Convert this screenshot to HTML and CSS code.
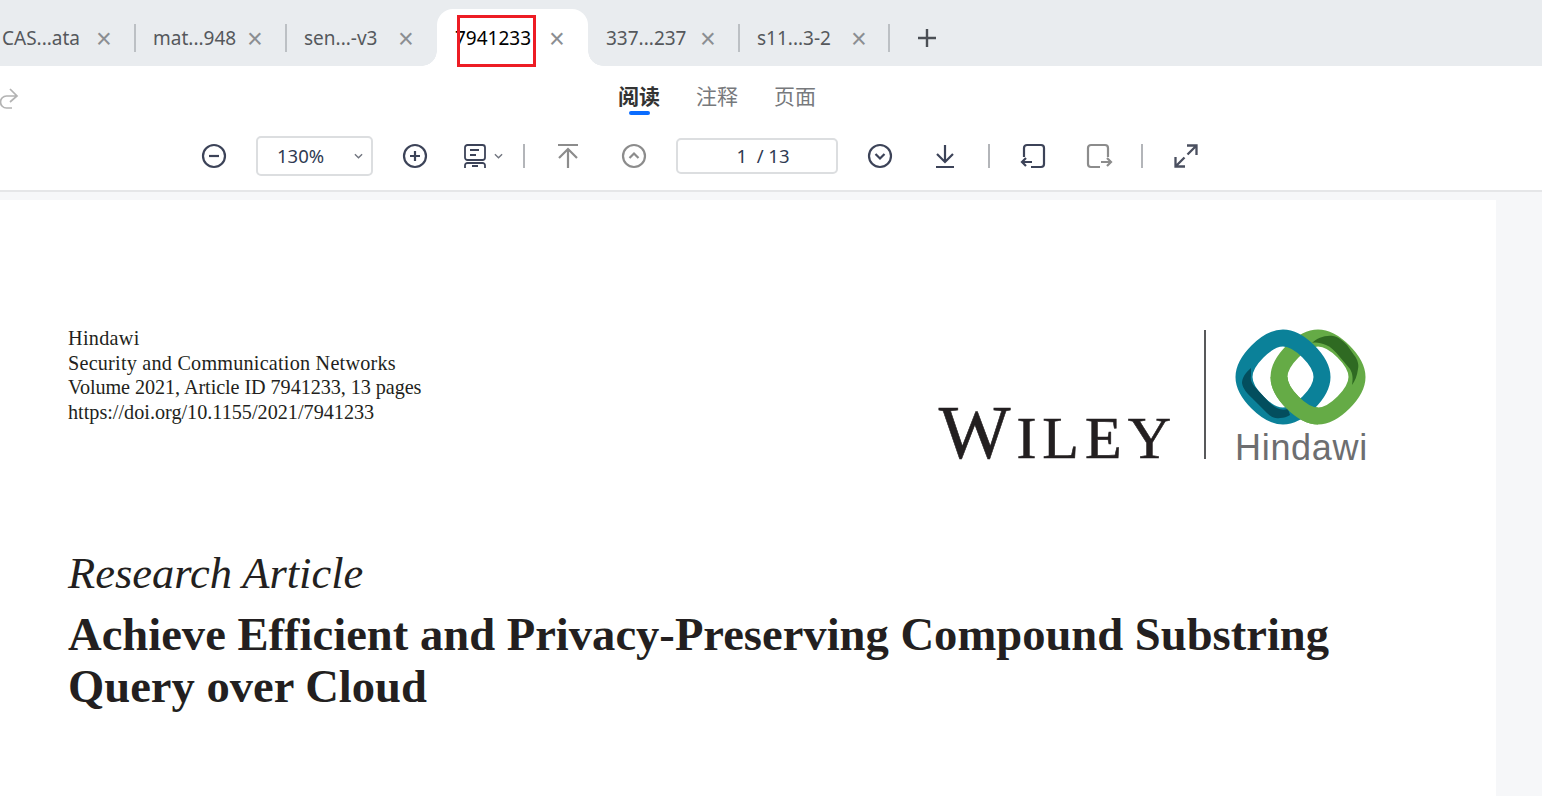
FILE: index.html
```html
<!DOCTYPE html>
<html lang="en">
<head>
    <meta charset="UTF-8">
    <meta name="viewport" content="width=device-width, initial-scale=1.0">
    <title>7941233</title>
    <link rel="stylesheet" href="styles.css">
</head>
<body>
    <div class="tabbar">
        <div class="tab"><span class="tab-name">CAS...ata</span><span class="tab-close">×</span></div>
        <div class="tab"><span class="tab-name">mat...948</span><span class="tab-close">×</span></div>
        <div class="tab tab-nosep"><span class="tab-name">sen...-v3</span><span class="tab-close">×</span></div>
        <div class="tab tab-active"><span class="tab-name">7941233</span><span class="tab-close">×</span><div class="highlight"></div></div>
        <div class="tab"><span class="tab-name">337...237</span><span class="tab-close">×</span></div>
        <div class="tab tab-last"><span class="tab-name">s11...3-2</span><span class="tab-close">×</span></div>
        <svg class="tab-add" viewBox="0 0 20 20"><path d="M10 1v18M1 10h18"/></svg>
    </div>

    <div class="header">
        <div class="modes">
            <svg class="redo" viewBox="0 0 20 24"><path d="M17 11H6.500a6 6 0 0 0 0 12H12M10 4l7 7-7 6"/></svg>
            <div class="mode-list">
                <div class="mode mode-active">阅读</div>
                <div class="mode">注释</div>
                <div class="mode">页面</div>
            </div>
        </div>

        <div class="toolbar">
            <div class="group group-zoom">
                <button class="tool"><svg viewBox="0 0 24 24"><circle cx="12" cy="12" r="11"/><path d="M7 12h10"/></svg></button>
                <div class="zoom-select"><span class="zoom-value">130%</span><svg class="caret" viewBox="0 0 10 6"><path d="M1 1l4 4 4-4"/></svg></div>
                <button class="tool"><svg viewBox="0 0 24 24"><circle cx="12" cy="12" r="11"/><path d="M7 12h10M12 7v10"/></svg></button>
                <div class="layout-btn">
                    <svg class="layout-icon" viewBox="0 0 22 24"><rect x="1" y="1" width="20" height="15" rx="2.5"/><path d="M6 6h9M6 11h6M1 24v-2.500a2.500 2.500 0 0 1 2.500-2.500h15a2.500 2.500 0 0 1 2.500 2.500v2.500M8 22h6"/></svg>
                    <svg class="caret" viewBox="0 0 10 6"><path d="M1 1l4 4 4-4"/></svg>
                </div>
            </div>
            <span class="sep"></span>
            <div class="group group-nav">
                <div class="group group-pageup">
                    <button class="tool tool-off"><svg viewBox="0 0 24 24"><path d="M2 1h20M12 24V6M3 14l9-9 9 9"/></svg></button>
                    <button class="tool tool-off"><svg viewBox="0 0 24 24"><circle cx="12" cy="12" r="11"/><path d="M7.500 14l4.500-4.500 4.500 4.500"/></svg></button>
                </div>
                <div class="page-box">1&nbsp;&nbsp;/&nbsp;13</div>
                <button class="tool"><svg viewBox="0 0 24 24"><circle cx="12" cy="12" r="11"/><path d="M7.500 10l4.500 4.500 4.500-4.500"/></svg></button>
                <button class="tool tool-download"><svg viewBox="0 0 24 24"><path d="M12 1v17M4 10l8 8 8-8M3 23h18"/></svg></button>
            </div>
            <span class="sep"></span>
            <div class="group group-rotate">
                <button class="tool"><svg viewBox="0 0 24 24"><path d="M3 13V4a3 3 0 0 1 3-3h14a3 3 0 0 1 3 3v16a3 3 0 0 1-3 3H10M1 18h10M5 14l-4 4 4 4"/></svg></button>
                <button class="tool tool-off"><svg viewBox="0 0 24 24"><path d="M21 13V4a3 3 0 0 0-3-3H4a3 3 0 0 0-3 3v16a3 3 0 0 0 3 3h9M14 18h10M20 14l4 4-4 4"/></svg></button>
            </div>
            <span class="sep"></span>
            <button class="tool tool-expand"><svg viewBox="0 0 24 24"><path d="M13 1.500h9.500V11M22.500 1.500l-9 9M1.500 13v9.500H11M1.500 22.500l9-9"/></svg></button>
        </div>
    </div>

    <div class="viewer">
        <div class="paper">
            <div class="paper-top">
                <div class="meta">
                    <div class="meta-name">Hindawi</div>
                    <div class="meta-journal">Security and Communication Networks</div>
                    <div class="meta-volume">Volume 2021, Article ID 7941233, 13 pages</div>
                    <div>https://doi.org/10.1155/2021/7941233</div>
                </div>
                <div class="logos">
                    <div class="wiley"><span class="wiley-w">W</span>ILEY</div>
                    <div class="logo-rule"></div>
                    <div class="hindawi">
                        <svg class="rings" viewBox="0 0 132 96">
                            <path class="ring-green" transform="translate(35 0)" d="M48 9C64 9 87 32 87 48C87 64 64 87 48 87C32 87 9 64 9 48C9 32 32 9 48 9Z"/>
                            <path fill="#2f6a22" d="M77 14C82 9 90 6 98 7C104 8 108 12 112 16L119 26C123 31 124 36 123 40C122 47 120 52 117 56C118 50 118 45 115 40L104 27C100 22 96 18 91 16C86 14 81 13 77 14Z"/>
                            <path class="ring-teal" d="M48 9C64 9 87 32 87 48C87 64 64 87 48 87C32 87 9 64 9 48C9 32 32 9 48 9Z"/>
                            <path fill="#034e5e" d="M16 39C10 44 7 49 7 54C8 60 12 64 17 69L32 84C36 88 40 90 45 89C49 89 52 88 55 86L53 80C49 81 46 81 42 79C38 77 35 74 32 71L20 58C17 55 15 51 16 47Z"/>
                            <path class="ring-green" transform="translate(35 0)" d="M9 48C9 64 32 87 48 87"/>
                        </svg>
                        <div class="hindawi-name">Hindawi</div>
                    </div>
                </div>
            </div>
            <div class="article-type">Research Article</div>
            <h1 class="article-title">Achieve Efficient and Privacy-Preserving Compound Substring Query over Cloud</h1>
        </div>
    </div>
</body>
</html>
```

FILE: styles.css
```css
html, body {
    margin: 0;
    padding: 0;
    height: 796px;
    overflow: hidden;
}

body {
    font-family: "Noto Sans", "Noto Sans CJK SC", sans-serif;
    background-color: #fff;
    color: #333;
}

button {
    border: 0;
    background: none;
    padding: 0;
}

/* tabs */
.tabbar {
    display: flex;
    align-items: flex-end;
    height: 66px;
    margin-left: -15px;
    width: 1557px;
    background-color: #e9ecef;
}

.tab {
    position: relative;
    display: flex;
    align-items: center;
    box-sizing: border-box;
    width: 151px;
    height: 57px;
    padding: 0 0 0 17px;
    font-size: 19px;
    color: #55585c;
}

.tab::after {
    content: "";
    position: absolute;
    right: 0;
    top: 15px;
    width: 2px;
    height: 28px;
    background-color: #bcc0c4;
}

.tab-nosep::after {
    display: none;
}

.tab-last {
    width: 150px;
}

.tab-name {
    width: 94px;
    white-space: nowrap;
    line-height: 26px;
}

.tab-close {
    font-family: "Liberation Sans", sans-serif;
    font-size: 27px;
    font-weight: 300;
    color: #8b8e92;
    line-height: 26px;
    margin-top: 2px;
}

.tab-active {
    margin: 0 1px 0 -1px;
    padding-left: 18px;
    background-color: #fff;
    border-radius: 16px 16px 0 0;
    color: #000;
}

.tab-active::before,
.tab-active::after {
    content: "";
    position: absolute;
    top: auto;
    bottom: 0;
    width: 15px;
    height: 15px;
    background-color: transparent;
}

.tab-active::before {
    left: -15px;
    background-image: radial-gradient(circle at 0 0, #e9ecef 14.500px, #fff 15px);
}

.tab-active::after {
    right: -15px;
    background-image: radial-gradient(circle at 100% 0, #e9ecef 14.500px, #fff 15px);
}

.highlight {
    position: absolute;
    left: 20px;
    top: 6px;
    width: 73px;
    height: 46px;
    border: 3px solid #ed1c24;
}

.tab-add {
    width: 20px;
    height: 20px;
    margin: 0 0 18px 27px;
    fill: none;
    stroke: #4b4f55;
    stroke-width: 2.400;
}

/* reader header */
.header {
    box-sizing: border-box;
    height: 126px;
    border-bottom: 2px solid #e5e6e8;
}

.modes {
    display: flex;
    align-items: center;
    height: 61px;
}

.redo {
    width: 20px;
    height: 24px;
    flex: none;
    fill: none;
    stroke: #b3b3b3;
    stroke-width: 1.700;
}

.mode-list {
    display: flex;
    gap: 36px;
    margin: -4px 0 0 598px;
}

.mode {
    position: relative;
    font-family: "Noto Sans CJK SC", sans-serif;
    font-size: 21px;
    line-height: 30px;
    color: #77797c;
}

.mode-active {
    font-weight: 700;
    color: #333;
}

.mode-active::after {
    content: "";
    position: absolute;
    left: 11px;
    bottom: -5px;
    width: 21px;
    height: 4px;
    border-radius: 2px;
    background-color: #0a6cff;
}

.toolbar {
    display: flex;
    align-items: center;
    gap: 20px;
    height: 58px;
    padding-left: 192px;
}

.group {
    display: flex;
    align-items: center;
}

.group-zoom {
    gap: 20px;
}

.group-nav {
    gap: 20px;
    margin-left: 1px;
}

.group-pageup {
    gap: 22px;
}

.group-rotate {
    gap: 22px;
    margin-left: 1px;
}

.tool {
    display: flex;
    align-items: center;
    justify-content: center;
    width: 44px;
    height: 26px;
}

.tool-download {
    width: 46px;
}

.tool-expand {
    margin-left: 1px;
}

.tool svg {
    width: 24px;
    height: 24px;
    fill: none;
    stroke: #3c4358;
    stroke-width: 2.200;
    overflow: visible;
}

.tool-off svg {
    stroke: #8c8c8c;
}

.tool-expand svg {
    stroke: #4a4f5f;
    stroke-width: 2.300;
}

.zoom-select {
    display: flex;
    align-items: center;
    justify-content: space-between;
    box-sizing: border-box;
    width: 117px;
    height: 40px;
    padding: 0 8px 0 19px;
    border: 2px solid #dcdee0;
    border-radius: 5px;
    font-size: 18.500px;
    color: #2f3a52;
}

.zoom-value {
    margin-top: -2px;
}

.caret {
    width: 9px;
    height: 6px;
    fill: none;
    stroke: #70747e;
    stroke-width: 1.500;
}

.layout-btn {
    display: flex;
    align-items: center;
    box-sizing: border-box;
    width: 46px;
    padding-left: 7px;
    gap: 8px;
}

.layout-icon {
    width: 22px;
    height: 24px;
    fill: none;
    stroke: #3c4358;
    stroke-width: 1.800;
}

.sep {
    width: 2px;
    height: 24px;
    background-color: #b3b5b9;
}

.page-box {
    box-sizing: border-box;
    width: 162px;
    height: 36px;
    padding-left: 12px;
    border: 2px solid #dcdee0;
    border-radius: 5px;
    text-align: center;
    font-size: 18.500px;
    line-height: 32px;
    color: #2f3a52;
}

/* document */
.viewer {
    height: 604px;
    padding-top: 8px;
    box-sizing: border-box;
    background-color: #f6f7f9;
    overflow: hidden;
}

.paper {
    box-sizing: border-box;
    width: 1496px;
    height: 640px;
    padding: 126px 129px 0 68px;
    background-color: #fff;
    font-family: "Liberation Serif", serif;
    color: #231f20;
}

.paper-top {
    display: flex;
    justify-content: space-between;
    align-items: flex-start;
    height: 221px;
}

.meta {
    font-size: 20.200px;
    line-height: 24.600px;
}

.meta-name {
    letter-spacing: 0.300px;
}

.meta-journal {
    letter-spacing: 0.220px;
}

.meta-volume {
    letter-spacing: -0.070px;
}

.logos {
    display: flex;
    align-items: flex-start;
    height: 130px;
    margin-top: 3px;
}

.wiley {
    align-self: flex-end;
    margin-bottom: -6px;
    font-size: 60px;
    line-height: 54px;
    color: #231f20;
    letter-spacing: 6px;
    -webkit-text-stroke: 0.600px #231f20;
}

.wiley-w {
    font-size: 76px;
    line-height: 54px;
}

.logo-rule {
    width: 2px;
    height: 129px;
    margin: 1px 29px 0 27px;
    background-color: #58595b;
}

.hindawi {
    display: flex;
    flex-direction: column;
    width: 132px;
    height: 130px;
}

.rings {
    display: block;
    flex: none;
    width: 132px;
    height: 96px;
}

.ring-teal,
.ring-green {
    fill: none;
    stroke-width: 17;
}

.ring-teal {
    stroke: #0b8199;
}

.ring-green {
    stroke: #65ab46;
}

.hindawi-name {
    flex: none;
    margin-top: 6px;
    font-family: "Liberation Sans", sans-serif;
    font-size: 36px;
    line-height: 34px;
    letter-spacing: 0.700px;
    white-space: nowrap;
    color: #6d6e70;
}

.article-type {
    font-style: italic;
    font-size: 44.500px;
    line-height: 52px;
}

.article-title {
    margin: 9px 0 0;
    font-size: 46.600px;
    line-height: 52px;
    font-weight: 700;
}
```
